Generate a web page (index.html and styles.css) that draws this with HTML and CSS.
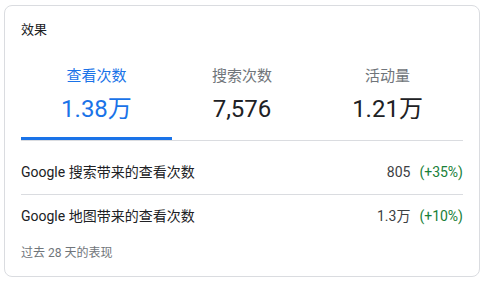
FILE: index.html
```html
<!DOCTYPE html>
<html lang="zh-CN">
<head>
<meta charset="utf-8">
<title>效果</title>
<link rel="stylesheet" href="styles.css">
</head>
<body>
<section class="card">
  <h2 class="title">效果</h2>
  <div class="tabs">
    <div class="tab active">
      <div class="tab-label">查看次数</div>
      <div class="tab-value">1.38万</div>
    </div>
    <div class="tab">
      <div class="tab-label">搜索次数</div>
      <div class="tab-value">7,576</div>
    </div>
    <div class="tab">
      <div class="tab-label">活动量</div>
      <div class="tab-value">1.21万</div>
    </div>
  </div>
  <div class="rows">
    <div class="row">
      <span class="row-label">Google 搜索带来的查看次数</span>
      <span class="row-stat"><span class="row-num">805</span><span class="row-delta">(+35%)</span></span>
    </div>
    <div class="row">
      <span class="row-label">Google 地图带来的查看次数</span>
      <span class="row-stat"><span class="row-num">1.3万</span><span class="row-delta">(+10%)</span></span>
    </div>
  </div>
  <p class="footer">过去 28 天的表现</p>
</section>
</body>
</html>
```

FILE: styles.css
```css
html, body {
  margin: 0;
  padding: 0;
  background: #ffffff;
}
body {
  font-family: Roboto, "Noto Sans CJK SC", sans-serif;
  color: #3c4043;
}
.card {
  box-sizing: border-box;
  width: 476px;
  height: 272px;
  margin: 5px 0 0 4px;
  border: 1px solid #dadce0;
  border-radius: 8px;
  padding: 14px 16px 15px;
  display: flex;
  flex-direction: column;
}
.title {
  margin: 0;
  font-size: 13px;
  line-height: 20px;
  font-weight: 400;
  color: #202124;
}
.tabs {
  display: flex;
  border-bottom: 1px solid #dadce0;
}
.tab {
  flex: 1 1 auto;
  text-align: center;
  padding: 26px 0 12px;
  border-bottom: 3px solid transparent;
}
.tab.active {
  border-bottom-color: #1a73e8;
}
.tab-label {
  font-size: 15px;
  line-height: 20px;
  color: #70757a;
}
.tab-value {
  margin-top: 7px;
  font-size: 24px;
  line-height: 32px;
  color: #202124;
}
.tab.active .tab-label,
.tab.active .tab-value {
  color: #1a73e8;
}
.rows {
  margin-top: 9px;
}
.row {
  display: flex;
  justify-content: space-between;
  align-items: center;
  font-size: 14px;
  line-height: 20px;
  padding: 12px 0 12px;
}
.row + .row {
  border-top: 1px solid #dadce0;
  padding-top: 11px;
}
.row-label {
  color: #202124;
}
.row-stat {
  display: flex;
  gap: 9px;
}
.row-num {
  color: #3c4043;
}
.row-delta {
  color: #188038;
}
.footer {
  margin: 7px 0 0;
  font-size: 12px;
  line-height: 16px;
  color: #70757a;
}
```
